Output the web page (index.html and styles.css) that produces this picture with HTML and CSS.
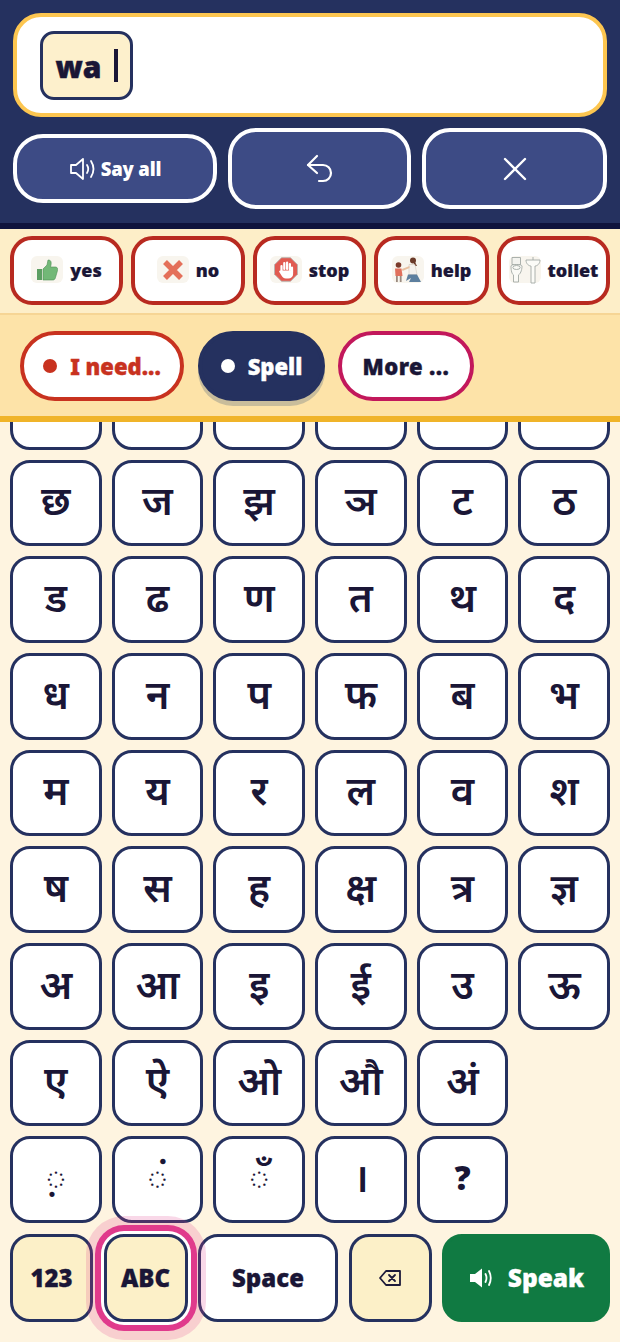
FILE: index.html
```html
<!DOCTYPE html>
<html lang="hi">
<head>
<meta charset="utf-8">
<title>Spell</title>
<link rel="stylesheet" href="styles.css">
</head>
<body>
<div class="app">
  <header class="top">
    <div class="sentence">
      <div class="chip"><span>wa</span><i class="caret"></i></div>
    </div>
    <div class="actions">
      <button class="act say">
        <svg width="30" height="26" viewBox="0 0 30 26" fill="none" stroke="#fff" stroke-width="1.800" stroke-linecap="round" stroke-linejoin="round"><path d="M2 9v8h5l7 6V3L7 9z"/><path d="M18 9q2.500 4 0 8"/><path d="M22 5q5 8 0 16"/></svg>
        <span>Say all</span>
      </button>
      <button class="act undo">
        <svg width="30" height="32" viewBox="0 0 30 32" fill="none" stroke="#fff" stroke-width="2.200" stroke-linecap="round" stroke-linejoin="round"><path d="M12 3 3 12l9 8"/><path d="M3 12h15a8 8 0 0 1 0 16h-4"/></svg>
      </button>
      <button class="act close">
        <svg width="26" height="26" viewBox="0 0 26 26" fill="none" stroke="#fff" stroke-width="2.400" stroke-linecap="round"><path d="M3 3l20 20M23 3 3 23"/></svg>
      </button>
    </div>
  </header>
  <div class="quick">
    <button class="q"><span class="pic"><svg width="22" height="22" viewBox="0 0 22 22"><path d="M1 10h5v11H1z" fill="#5c9e62"/><path d="M7 10l4-4 1-5c3 0 3.500 2 3 5l-.5 2h5c2 0 2.500 2 2 3.500l-2 7c-.5 2-1.500 2.500-3 2.500H7z" fill="#72b877" stroke="#4e8f56" stroke-width=".6"/></svg></span><b>yes</b></button>
    <button class="q"><span class="pic"><svg width="24" height="24" viewBox="0 0 24 24"><path d="M4 4l16 16M20 4 4 20" stroke="#e4705a" stroke-width="5.500"/></svg></span><b>no</b></button>
    <button class="q"><span class="pic"><svg width="24" height="25" viewBox="0 0 24 25"><path d="M7.500 .7h9l7 7v9.600l-7 7h-9l-7-7V7.700z" fill="#e15a50" stroke="#bdb3b0" stroke-width="1"/><path d="M7.500 14V9M10.300 12V6M13.100 12V5.500M15.900 13V7M18 14.500v-4" stroke="#fff" stroke-width="2.200" stroke-linecap="round" fill="none"/><path d="M6.400 13.500h12.700v3.500c0 2.800-2 4.500-4.800 4.500h-2.500c-2 0-3-1-4-2.500l-2.500-4c-.7-1.200.8-2.200 1.800-1.200z" fill="#fff"/></svg></span><b>stop</b></button>
    <button class="q"><span class="pic"><svg width="31" height="26" viewBox="0 0 31 26"><circle cx="6.500" cy="8" r="2.800" fill="#7a3a2a"/><path d="M3 11.500h6.500l1 7.500H3.500z" fill="#e0705c"/><path d="M4 19h1.800v6H4zM7.800 19h1.800v6H7.800z" fill="#9a8a80"/><circle cx="21" cy="3.500" r="3" fill="#6a3a28"/><path d="M22 3l3 6-3 0z" fill="#6a3a28"/><path d="M17 7.500h6l2 10h-8z" fill="#f5f1ec" stroke="#cfc2b5" stroke-width=".5"/><path d="M10 12l7.500-3v2l-7 3z" fill="#e8c0a0"/><path d="M16 17.500h9l4 7.500H17l2-4-5 3z" fill="#5d7f9e"/></svg></span><b>help</b></button>
    <button class="q"><span class="pic"><svg width="32" height="28" viewBox="0 0 32 28" fill="none" stroke="#a3a9a5" stroke-width=".9"><path d="M3 1.500h8.500v7H3z" fill="#f3f3ef"/><path d="M2 10c0-2 11-2 11 0 0 5-2 8-3.500 9v7h-5v-7C3 18 2 15 2 10z" fill="#fafaf6"/><ellipse cx="7.500" cy="11.500" rx="3.700" ry="2"/><path d="M17 4h14c0 4-3 6-5 6v17h-4V10c-2 0-5-2-5-6z" fill="#fbfbf7"/><path d="M24 1v3"/></svg></span><b>toilet</b></button>
  </div>
  <nav class="tabs">
    <button class="tab need"><i class="dot"></i>I need...</button>
    <button class="tab spell"><i class="dot"></i>Spell</button>
    <button class="tab more">More ...</button>
  </nav>
  <main class="board">
    <div class="keys">
      <button class="k">क</button><button class="k">ख</button><button class="k">ग</button><button class="k">घ</button><button class="k">ङ</button><button class="k">च</button>
      <button class="k">छ</button><button class="k">ज</button><button class="k">झ</button><button class="k">ञ</button><button class="k">ट</button><button class="k">ठ</button>
      <button class="k">ड</button><button class="k">ढ</button><button class="k">ण</button><button class="k">त</button><button class="k">थ</button><button class="k">द</button>
      <button class="k">ध</button><button class="k">न</button><button class="k">प</button><button class="k">फ</button><button class="k">ब</button><button class="k">भ</button>
      <button class="k">म</button><button class="k">य</button><button class="k">र</button><button class="k">ल</button><button class="k">व</button><button class="k">श</button>
      <button class="k">ष</button><button class="k">स</button><button class="k">ह</button><button class="k">क्ष</button><button class="k">त्र</button><button class="k">ज्ञ</button>
      <button class="k">अ</button><button class="k">आ</button><button class="k">इ</button><button class="k">ई</button><button class="k">उ</button><button class="k">ऊ</button>
      <button class="k">ए</button><button class="k">ऐ</button><button class="k">ओ</button><button class="k">औ</button><button class="k">अं</button><span></span>
      <button class="k">़</button><button class="k">ं</button><button class="k">ँ</button><button class="k">।</button><button class="k latin">?</button>
    </div>
    <footer class="bar">
      <button class="b soft n">123</button>
      <button class="b soft abc">ABC</button>
      <button class="b space">Space</button>
      <button class="b soft bk"><svg width="24" height="18" viewBox="0 0 24 18" fill="none" stroke="#1d1a3a" stroke-width="1.800" stroke-linejoin="round" stroke-linecap="round"><path d="M22 2H8L2 9l6 7h14z"/><path d="M11 6l6 6M17 6l-6 6"/></svg></button>
      <button class="b speak"><svg width="28" height="24" viewBox="0 0 28 24" fill="#fff"><path d="M2 8h5l7-5.500v19L7 16H2z"/><path d="M17.500 8q2 4 0 8M21 5q3.500 7 0 14" fill="none" stroke="#fff" stroke-width="1.800" stroke-linecap="round"/></svg><span>Speak</span></button>
    </footer>
  </main>
</div>
</body>
</html>
```
FILE: styles.css
```css
* { box-sizing: border-box; }
html, body { margin: 0; height: 100%; overflow: hidden; }
body { font-family: "Noto Sans", "Open Sans", sans-serif; color: #1a1636; background: #fef4e0; }
button { font: inherit; color: inherit; padding: 0; cursor: pointer; }
.app { width: 620px; height: 1342px; display: flex; flex-direction: column; overflow: hidden; }

.top { height: 229px; flex: none; background: #25315f; border-bottom: 6px solid #10143c; padding: 13px 13px 0; }
.sentence { height: 104px; background: #fff; border: 4px solid #fdc650; border-radius: 28px; padding: 14px 23px; }
.chip { width: 93px; height: 69px; background: #fdf0cc; border: 3px solid #25315f; border-radius: 14px; display: flex; align-items: center; justify-content: center; gap: 12px; font-size: 30px; font-weight: 900; -webkit-text-stroke: .5px #1a1636; padding-top: 2px; }
.caret { width: 4px; height: 33px; background: #1a1636; margin-top: -2px; }
.actions { display: flex; align-items: center; gap: 11px; margin-top: 11px; }
.act { background: #3d4b85; border: 4px solid #fff; color: #fff; display: flex; align-items: center; justify-content: center; }
.say { flex: 0 0 204px; height: 69px; border-radius: 30px; gap: 2px; font-size: 18.500px; font-weight: 900; letter-spacing: -.2px; }
.undo { flex: 0 0 183px; height: 81px; border-radius: 28px; }
.close { flex: 1 1 0; height: 81px; border-radius: 28px; }

.quick { height: 84px; flex: none; background: #fdeec8; display: grid; grid-template-columns: 113px 114px 113px 115px 113px; gap: 8px; padding: 7px 10px 0; }
.q { height: 69px; background: #fff; border: 4px solid #b82a20; border-radius: 22px; display: flex; align-items: center; justify-content: center; gap: 7px; font-size: 18px; padding-bottom: 2px; }
.q b { font-weight: 900; -webkit-text-stroke: .2px #1a1636; }
.pic { flex: none; width: 32px; height: 27px; background: #f8f5ee; border-radius: 6px; display: flex; align-items: center; justify-content: center; }

.tabs { height: 109px; flex: none; background: #fde3a8; border-top: 2px solid #f6d595; border-bottom: 6px solid #f0b429; display: flex; gap: 14px; padding: 16px 20px 0; }
.tab { height: 70px; border-radius: 35px; background: #fff; display: flex; align-items: center; justify-content: center; gap: 13px; font-size: 22px; font-weight: 900; border: 4px solid #c8321f; -webkit-text-stroke: .4px currentColor; }
.dot { width: 14px; height: 14px; border-radius: 50%; background: currentColor; }
.need { width: 164px; color: #c8321f; }
.spell { width: 127px; background: #25315f; border-color: #25315f; color: #fff; box-shadow: 0 5px 0 #c9bd9b; }
.more { width: 136px; border-color: #c2185b; margin-left: -1px; letter-spacing: .4px; }

.board { flex: 1 1 0; min-height: 0; overflow: hidden; padding: 0 10px; display: flex; flex-direction: column; }
.keys { flex: none; margin-top: -59px; display: grid; grid-template-columns: repeat(6, 1fr); grid-auto-rows: 86.67px; gap: 10px; }
.k { background: #fff; border: 3px solid #25315f; border-radius: 20px; font-family: "Noto Sans Devanagari", "Noto Sans", sans-serif; font-size: 40px; font-weight: 600; display: flex; align-items: center; justify-content: center; padding-top: 5px; }
.latin { font-weight: 900; font-size: 34px; }
.bar { flex: none; display: flex; gap: 10.500px; height: 88px; margin-top: 11px; }
.b { height: 88px; border: 3px solid #25315f; border-radius: 20px; background: #fff; font-size: 24px; font-weight: 900; display: flex; align-items: center; justify-content: center; -webkit-text-stroke: .3px currentColor; }
.soft { background: #fcf0c8; }
.n { flex: 0 0 83px; }
.abc { flex: 0 0 84px; position: relative; z-index: 1; box-shadow: 0 0 0 3px #fff, 0 0 0 9px #e03a8c, 0 0 0 18px rgba(224, 58, 140, .2); }
.space { flex: 0 0 140px; }
.bk { flex: 0 0 83px; }
.speak { flex: 1 1 0; background: #107a42; border-color: #107a42; color: #fff; gap: 12px; font-size: 24.500px; }
```
